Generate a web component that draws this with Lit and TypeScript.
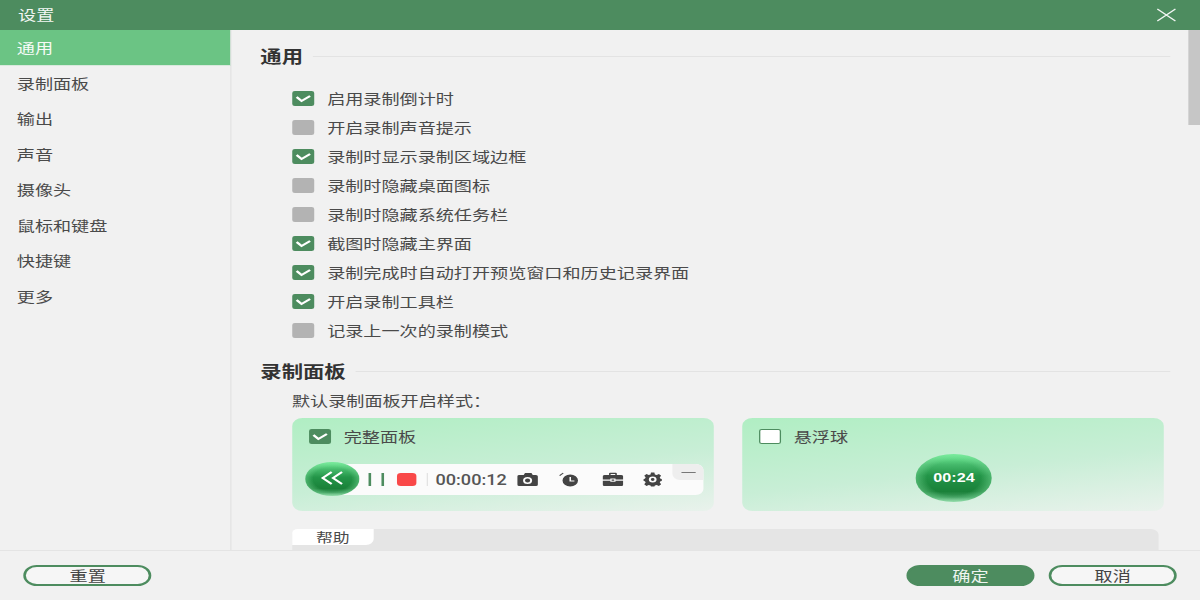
import { LitElement, html, css, svg } from "lit";
import { customElement } from "lit/decorators.js";

const nav = ["通用", "录制面板", "输出", "声音", "摄像头", "鼠标和键盘", "快捷键", "更多"];
const options: [string, boolean][] = [
  ["启用录制倒计时", true],
  ["开启录制声音提示", false],
  ["录制时显示录制区域边框", true],
  ["录制时隐藏桌面图标", false],
  ["录制时隐藏系统任务栏", false],
  ["截图时隐藏主界面", true],
  ["录制完成时自动打开预览窗口和历史记录界面", true],
  ["开启录制工具栏", true],
  ["记录上一次的录制模式", false],
];

const tick = svg`<path d="M3.400 6 L7.200 10 L13.800 5" fill="none" stroke="#fff" stroke-width="2"/>`;

@customElement("app-root")
export class AppRoot extends LitElement {
  static styles = css`
    :host {
      display: block;
      width: 928px;
      height: 600px;
      overflow: hidden;
      transform: scaleX(1.2931);
      transform-origin: 0 0;
      background: #f1f1f1;
      color: #4a4a4a;
      font-family: "Liberation Sans", "Noto Sans CJK SC", sans-serif;
      font-size: 14px;
    }
    .title {
      height: 30px;
      box-sizing: border-box;
      background: #4d8c5f;
      color: #f4f8f5;
      display: flex;
      align-items: center;
      justify-content: space-between;
      padding: 0 17.8px 2px 14px;
    }
    .close { width: 16px; height: 14px; display: block; margin-top: 2px; }
    .main { height: 520px; display: flex; overflow: hidden; position: relative; }
    .side {
      width: 178px;
      flex: none;
      border-right: 1px solid #e4e4e4;
    }
    .nav {
      height: 35.5px;
      line-height: 37.5px;
      padding-left: 13px;
    }
    .nav.on {
      background: #6bc484;
      color: #f6fbf7;
      height: 35px;
      line-height: 37px;
      border-bottom: 1px solid #d9e9dd;
      margin-bottom: -0.5px;
    }
    .content { flex: 1; padding: 16px 0 0 22.3px; overflow: hidden; min-width: 0; }
    .head { display: flex; align-items: center; gap: 8px; height: 20px; width: 704.2px; font-size: 16.5px; font-weight: 700; color: #333; }
    .head::after { content: ""; flex: 1; height: 1px; background: #e3e3e3; }
    .list { margin: 17.5px 0 16.5px 24.5px; }
    .row { height: 29px; display: flex; align-items: center; gap: 10.2px; }
    .cb { width: 17px; height: 15px; border-radius: 2px; background: #b3b3b3; flex: none; display: block; }
    .cb.on { background: #4d8c5f; }
    .cb.blank { box-sizing: border-box; background: #fff; border: 1px solid #4d8c5f; }
    .sub { margin: 10px 0 7px 24.5px; height: 20px; line-height: 20px; }
    .cards { display: flex; gap: 22px; margin-left: 24.5px; }
    .card {
      width: 326px;
      height: 93px;
      border-radius: 8px;
      background: linear-gradient(172deg, #b0eec3 0%, #c8eed6 55%, #e9f2ec 100%);
      padding: 10px 8px 0 10px;
      box-sizing: border-box;
    }
    .card-top { display: flex; align-items: center; gap: 10px; height: 16px; margin-left: 3px; }
    .bar-wrap { display: flex; align-items: center; margin-top: 18px; height: 34px; position: relative; }
    .ball {
      border-radius: 50%;
      background:
        radial-gradient(ellipse 50% 50% at 50% 50%, rgba(130, 225, 160, 0) 70%, rgba(130, 225, 160, 0.45) 100%),
        linear-gradient(180deg, #74f29a 0%, #45b96b 22%, #239548 45%, #1a8139 78%, #3c9a5b 90%, #9fd9b2 100%);
      display: flex;
      align-items: center;
      justify-content: center;
      flex: none;
      color: #fff;
    }
    .ball.small { width: 42px; height: 34px; position: relative; z-index: 1; }
    .ball.small svg { width: 18px; height: 16px; display: block; margin-top: -2px; }
    .ball.big { width: 59px; height: 48px; margin: 10px auto 0; font-size: 12.5px; font-weight: 700; }
    .bar {
      flex: 1;
      height: 31px;
      margin-left: -20px;
      background: #fbfbfb;
      border-radius: 0 6px 6px 0;
      display: flex;
      align-items: center;
      padding-left: 27px;
      position: relative;
      top: 0.5px;
    }
    .pause { width: 2px; height: 13px; background: #4d8c5f; flex: none; }
    .pause + .pause { margin-left: 8px; }
    .rec { width: 15.5px; height: 13px; border-radius: 3px; background: #f94848; margin-left: 10px; flex: none; }
    .sep { width: 1px; height: 13px; background: #e3e3e3; margin: 0 6px 0 7.5px; flex: none; }
    .time { font-family: Roboto, "Liberation Sans", sans-serif; font-size: 14px; font-weight: 500; color: #555; width: 54.5px; flex: none; white-space: nowrap; }
    .ic { height: 15px; display: block; flex: none; color: #444; }
    .ic.cam { width: 16px; margin-left: 9px; }
    .ic.clk { width: 16px; margin-left: 15.5px; }
    .ic.cas { width: 16px; margin-left: 18px; }
    .ic.gear { width: 15.5px; margin-left: 15px; }
    .min {
      position: absolute;
      top: 0;
      right: 0;
      width: 23.5px;
      height: 16px;
      background: #eeeeee;
      border-radius: 0 6px 0 6px;
      display: flex;
      justify-content: center;
      padding-top: 8px;
      box-sizing: border-box;
    }
    .min::before { content: ""; width: 11px; height: 1px; background: #777; }
    .help {
      margin: 18px 0 0 24.5px;
      width: 670.4px;
      height: 30px;
      background: #e5e5e5;
      border-radius: 6px 6px 0 0;
    }
    .tab {
      width: 63px;
      height: 16px;
      line-height: 17px;
      font-size: 13px;
      text-align: center;
      background: #fff;
      border-radius: 4px 0 6px 0;
    }
    .scroll { position: absolute; right: 0; top: 0; width: 9.3px; height: 95px; background: #c6c6c6; }
    .foot {
      height: 50px;
      box-sizing: border-box;
      border-top: 1px solid #e4e4e4;
      display: flex;
      align-items: center;
      padding: 0 18px 0 18.3px;
    }
    .btn {
      width: 99px;
      height: 21px;
      line-height: 19px;
      box-sizing: border-box;
      border: 2px solid #4d8c5f;
      border-radius: 11px;
      text-align: center;
      color: #444;
      background: #f6f6f6;
    }
    .btn.primary { background: #4d8c5f; color: #eef5f0; margin-left: auto; }
    .btn.primary + .btn { margin-left: 11px; }
  `;

  private check(on: boolean, blank = false) {
    return html`<svg class="cb ${on ? "on" : ""} ${blank ? "blank" : ""}" viewBox="0 0 17 15">${on ? tick : ""}</svg>`;
  }

  render() {
    return html`
      <div class="title">
        <span>设置</span>
        <svg class="close" viewBox="0 0 16 14"><path d="M1 1 L15 13 M15 1 L1 13" stroke="#f2f6f3" stroke-width="1" fill="none"/></svg>
      </div>
      <div class="main">
        <div class="side">
          ${nav.map((n, i) => html`<div class="nav ${i === 0 ? "on" : ""}">${n}</div>`)}
        </div>
        <div class="content">
          <div class="head">通用</div>
          <div class="list">
            ${options.map(([t, on]) => html`<div class="row">${this.check(on)}<span>${t}</span></div>`)}
          </div>
          <div class="head">录制面板</div>
          <div class="sub">默认录制面板开启样式：</div>
          <div class="cards">
            <div class="card">
              <div class="card-top">${this.check(true)}<span>完整面板</span></div>
              <div class="bar-wrap">
                <div class="ball small">
                  <svg viewBox="0 0 18 16"><path d="M8.500 2 L1.500 8 L8.500 14 M16.500 2 L9.500 8 L16.500 14" fill="none" stroke="#fff" stroke-width="1.800"/></svg>
                </div>
                <div class="bar">
                  <div class="pause"></div><div class="pause"></div>
                  <div class="rec"></div>
                  <div class="sep"></div>
                  <div class="time">00:00:12</div>
                  <svg class="ic cam" viewBox="0 0 16 15">
                    <path fill="currentColor" fill-rule="evenodd" d="M2 3 H5 L6 1 H11 L12 3 H14.500 A1.500 1.500 0 0 1 16 4.500 V12.500 A1.500 1.500 0 0 1 14.500 14 H1.500 A1.500 1.500 0 0 1 0 12.500 V4.500 A1.500 1.500 0 0 1 2 3 Z M8 5 A3.500 3.500 0 1 0 8 12 A3.500 3.500 0 0 0 8 5 Z M8 6.500 A2 2 0 1 1 8 10.500 A2 2 0 0 1 8 6.500 Z"/>
                  </svg>
                  <svg class="ic clk" viewBox="0 0 16 15">
                    <path fill="currentColor" fill-rule="evenodd" d="M9 2.500 A6 6 0 1 1 9 14.500 A6 6 0 0 1 9 2.500 Z M8.400 5 V9.600 H12.200 V8.400 H9.600 V5 Z"/>
                    <path d="M0.800 3.600 L3.600 1" stroke="currentColor" stroke-width="1" fill="none"/>
                  </svg>
                  <svg class="ic cas" viewBox="0 0 16 15">
                    <path fill="currentColor" d="M5 3 V1.600 A.8 .8 0 0 1 5.800 .8 H10.200 A.8 .8 0 0 1 11 1.600 V3 H14.500 A1.500 1.500 0 0 1 16 4.500 V7.600 H10 V6.600 H6 V7.600 H0 V4.500 A1.500 1.500 0 0 1 1.500 3 Z M6.200 3 H9.800 V2 H6.200 Z M0 8.800 H6 V9.800 H10 V8.800 H16 V12.500 A1.500 1.500 0 0 1 14.500 14 H1.500 A1.500 1.500 0 0 1 0 12.500 Z M7 7.600 H9 V8.800 H7 Z"/>
                  </svg>
                  <svg class="ic gear" viewBox="0 0 16 16">
                    <path fill="currentColor" fill-rule="evenodd" d="M6.600 .5 H9.400 L9.800 2.600 L11.300 3.200 L13.100 2 L15 3.900 L13.800 5.700 L14.400 7.200 L15.500 7.500 V9.500 L14.400 9.800 L13.800 11.300 L15 13.100 L13.100 15 L11.300 13.800 L9.800 14.400 L9.400 15.500 H6.600 L6.200 14.400 L4.700 13.800 L2.900 15 L1 13.100 L2.200 11.300 L1.600 9.800 L.5 9.500 V7.500 L1.600 7.200 L2.200 5.700 L1 3.900 L2.900 2 L4.700 3.200 L6.200 2.600 Z M8 4.800 A3.200 3.200 0 1 0 8 11.200 A3.200 3.200 0 0 0 8 4.800 Z M8 6.500 A1.500 1.500 0 1 1 8 9.500 A1.500 1.500 0 0 1 8 6.500 Z"/>
                  </svg>
                  <div class="min"></div>
                </div>
              </div>
            </div>
            <div class="card">
              <div class="card-top">${this.check(false, true)}<span>悬浮球</span></div>
              <div class="ball big">00:24</div>
            </div>
          </div>
          <div class="help"><div class="tab">帮助</div></div>
        </div>
        <div class="scroll"></div>
      </div>
      <div class="foot">
        <div class="btn">重置</div>
        <div class="btn primary">确定</div>
        <div class="btn">取消</div>
      </div>
    `;
  }
}
